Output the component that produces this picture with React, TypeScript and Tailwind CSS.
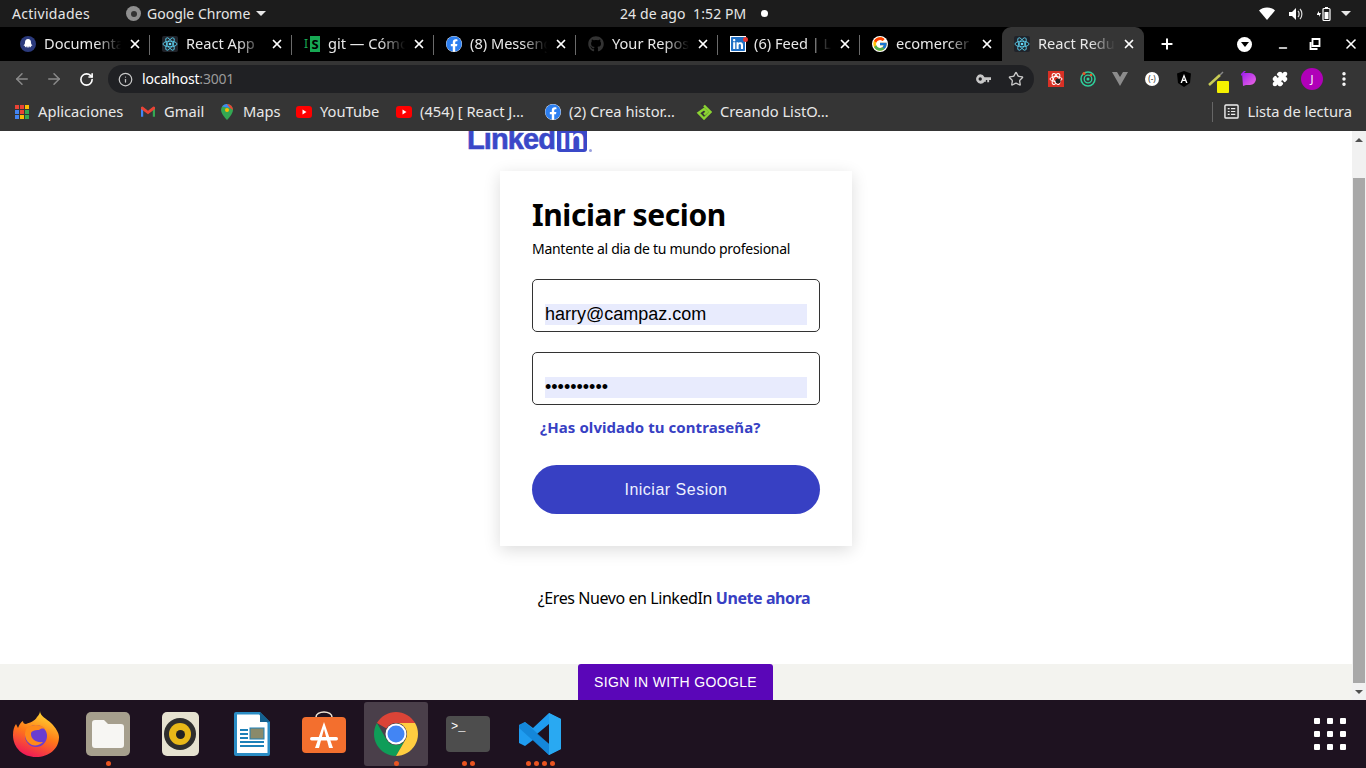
import { X, ArrowLeft, ArrowRight, RotateCw, Info, Star, Plus, Minus, Puzzle, MoreVertical } from "lucide-react"
import { FaFacebook, FaGithub, FaLinkedin } from "react-icons/fa"
import { FcGoogle } from "react-icons/fc"
import type { ReactNode } from "react"

function ReactIcon() {
  return (
    <svg viewBox="0 0 16 16" className="w-4 h-4 shrink-0">
      <rect width="16" height="16" rx="2" fill="#20232a" />
      <g fill="none" stroke="#61dafb" strokeWidth="0.8">
        <ellipse cx="8" cy="8" rx="7" ry="2.8" />
        <ellipse cx="8" cy="8" rx="7" ry="2.8" transform="rotate(60 8 8)" />
        <ellipse cx="8" cy="8" rx="7" ry="2.8" transform="rotate(120 8 8)" />
      </g>
      <circle cx="8" cy="8" r="1.3" fill="#61dafb" />
    </svg>
  )
}

function OctoIcon() {
  return (
    <svg viewBox="0 0 16 16" className="w-4 h-4 shrink-0">
      <circle cx="8" cy="8" r="8" fill="#2b3a7c" />
      <path d="M8 3c2 0 3 1.500 3 3.300 0 1.200.3 2.300 1.500 3.200l-1.200.3-.6 1.700-1-1.200-.8 1.700-.9-1.700-.9 1.700-.8-1.700-1 1.200-.6-1.700-1.200-.3C4.700 8.600 5 7.500 5 6.300 5 4.500 6 3 8 3z" fill="#fff" />
    </svg>
  )
}

function GitIcon() {
  return (
    <div className="w-4 h-4 shrink-0 flex items-center text-[13px] leading-4 font-bold">
      <span className="w-[6px] text-[#17a853] text-[12px] font-normal">I</span>
      <span className="w-[10px] h-4 bg-[#17a853] text-black text-center">S</span>
    </div>
  )
}

function YouTubeIcon() {
  return (
    <svg viewBox="0 0 16 12" className="w-4 h-3 shrink-0">
      <rect width="16" height="12" rx="3" fill="#f00" />
      <path d="M6.500 3.500v5l4-2.500z" fill="#fff" />
    </svg>
  )
}

function Tab({ icon, label, active, last, dot }: { icon: ReactNode; label: string; active?: boolean; last?: boolean; dot?: boolean }) {
  return (
    <div className={`relative w-[142px] h-[34px] flex items-center pl-3 pr-[8px] ${active ? "bg-[#353535] rounded-t-[9px]" : ""}`}>
      {icon}
      {dot && <div className="absolute left-[25px] top-[10px] w-[5px] h-[5px] rounded-full bg-[#e53935]" />}
      <span className="ml-2 flex-1 whitespace-nowrap text-[14.6px] text-[#e8e8e8] [mask-image:linear-gradient(to_right,black_62%,transparent_92%)]">
        {label}
      </span>
      <X className="w-[14px] h-[14px] text-white shrink-0" strokeWidth={3} />
      {!active && !last && <div className="absolute right-0 top-[8px] h-[20px] w-px bg-[#6a6a6a]" />}
    </div>
  )
}

function Bookmark({ icon, label, width }: { icon: ReactNode; label: string; width: number }) {
  return (
    <div className="flex items-center">
      <div className="w-4 flex justify-center shrink-0">{icon}</div>
      <span className="ml-2 pb-[2px] whitespace-nowrap text-[14.7px] text-[#e8e8e8]" style={{ width }}>
        {label}
      </span>
    </div>
  )
}

function ExtCell({ children }: { children: ReactNode }) {
  return <div className="relative w-8 h-8 flex items-center justify-center">{children}</div>
}

function DockCell({ children, dots = 0, active }: { children: ReactNode; dots?: number; active?: boolean }) {
  return (
    <div className="relative w-[72px] h-[68px] flex items-center justify-center">
      {active && <div className="absolute left-1 top-[2px] w-16 h-16 rounded-[3px] bg-[#4a3f4a]" />}
      <div className="relative">{children}</div>
      <div className="absolute bottom-[2px] left-0 right-0 flex justify-center gap-[3px]">
        {Array.from({ length: dots }).map((_, i) => (
          <div key={i} className="w-[5px] h-[5px] rounded-full bg-[#e95420]" />
        ))}
      </div>
    </div>
  )
}

export default function App() {
  return (
    <div className="w-[1366px] h-[768px] overflow-hidden flex flex-col font-['Noto_Sans',sans-serif] bg-white">
      {/* Ubuntu top bar */}
      <div className="h-[27px] bg-[#1c1c1c] flex items-center text-[14px] text-[#e6e6e6] shrink-0">
        <span className="ml-3 w-[114px] tracking-[0.3px]">Actividades</span>
        <div className="w-[15px] h-[15px] rounded-full bg-[#8f8f8f] flex items-center justify-center">
          <div className="w-[6px] h-[6px] rounded-full bg-[#333]" />
        </div>
        <span className="ml-[6px] w-[109px] whitespace-nowrap">Google Chrome</span>
        <div className="w-0 h-0 border-x-[5px] border-x-transparent border-t-[5px] border-t-[#e6e6e6]" />
        <span className="ml-[354px] w-[132px] whitespace-nowrap tracking-[0.1px]">24 de ago&nbsp; 1:52 PM</span>
        <div className="ml-[9px] w-[7px] h-[7px] rounded-full bg-white" />
        <svg viewBox="0 0 16 16" className="ml-[491px] w-4 h-4"><path d="M8 14L0 4.500C2 2.500 5 1.500 8 1.500s6 1 8 3z" fill="#fff" /></svg>
        <svg viewBox="0 0 16 16" className="ml-3 w-4 h-4"><path d="M2 6h3l4-4v12l-4-4H2z" fill="#fff" /><path d="M11 5c1.500 1.500 1.500 4.500 0 6M13 3c2.500 2.500 2.500 7.500 0 10" fill="none" stroke="#ddd" strokeWidth="1.200" /></svg>
        <svg viewBox="0 0 16 16" className="ml-[13px] w-4 h-4"><path d="M1 8l2-3v2h2L3 11V9H1z" fill="#fff" /><rect x="7" y="2.500" width="7" height="12" rx="1" fill="none" stroke="#fff" strokeWidth="1.200" /><rect x="8.500" y="6" width="4" height="7" fill="#fff" /><rect x="9" y="1" width="3" height="1.500" fill="#fff" /></svg>
        <div className="ml-[9px] w-0 h-0 border-x-[5px] border-x-transparent border-t-[5px] border-t-[#e6e6e6]" />
      </div>

      {/* Chrome tabs */}
      <div className="h-[34px] bg-black flex items-center pl-2 shrink-0">
        <Tab icon={<OctoIcon />} label="Documenta" />
        <Tab icon={<ReactIcon />} label="React App" />
        <Tab icon={<GitIcon />} label="git — Cómo" />
        <Tab icon={<FaFacebook className="w-4 h-4 shrink-0 text-[#2d7ff0] bg-white rounded-full" />} label="(8) Messeng" />
        <Tab icon={<FaGithub className="w-4 h-4 shrink-0 text-[#333]" />} label="Your Repos" />
        <Tab icon={<FaLinkedin className="w-4 h-4 shrink-0 text-[#1f6fc4] bg-white" />} label="(6) Feed | Li" dot />
        <Tab icon={<FcGoogle className="w-4 h-4 shrink-0 bg-white rounded-full" />} label="ecomercer -" last />
        <Tab icon={<ReactIcon />} label="React Redu" active />
        <Plus className="ml-[15px] w-4 h-4 text-white" strokeWidth={3} />
        <div className="ml-[62px] w-[15px] h-[15px] rounded-full bg-white flex items-center justify-center">
          <div className="w-0 h-0 border-x-[4px] border-x-transparent border-t-[5px] border-t-black" />
        </div>
        <Minus className="ml-[25px] mt-[8px] w-[12px] h-[12px] text-white" strokeWidth={3} />
        <svg viewBox="0 0 12 12" className="ml-[20px] w-[12px] h-[12px]"><path d="M3.500 1h7v7h-7z M1.500 4v7h7" fill="none" stroke="#fff" strokeWidth="1.800" /></svg>
        <X className="ml-[22px] w-[16px] h-[16px] text-white" strokeWidth={2.4} />
      </div>

      {/* Toolbar */}
      <div className="h-[36px] bg-[#353535] flex items-center pl-[6px] shrink-0">
        <div className="w-8 flex justify-center"><ArrowLeft className="w-[18px] h-[18px] text-[#8a8a8a]" /></div>
        <div className="w-8 flex justify-center"><ArrowRight className="w-[18px] h-[18px] text-[#8a8a8a]" /></div>
        <div className="w-8 flex justify-center"><RotateCw className="w-[15px] h-[15px] text-white" strokeWidth={2.6} /></div>
        <div className="ml-[6px] w-[926px] h-[28px] rounded-full bg-[#202124] flex items-center pl-[10px] pr-[10px]">
          <Info className="w-[15px] h-[15px] text-[#c8c8c8]" />
          <span className="ml-[9px] pb-[2px] text-[14px] tracking-[-0.2px] text-white">localhost<span className="text-[#9a9a9a]">:3001</span></span>
          <svg viewBox="0 0 16 10" className="ml-auto w-[15px] h-[10px]">
            <path d="M4.500 0a5 5 0 014.600 3H16v3h-2v2.500h-2V6h-1.500v2H9.100A5 5 0 114.500 0zm0 3.200a1.800 1.800 0 100 3.600 1.800 1.800 0 000-3.600z" fill="#c8c8c8" fillRule="evenodd" />
          </svg>
          <Star className="ml-[17px] w-4 h-4 text-[#c8c8c8]" />
        </div>
        <div className="ml-[6px] flex items-center">
          <ExtCell>
            <div className="w-4 h-4 bg-[#d93025] flex items-center justify-center">
              <svg viewBox="0 0 16 16" className="w-4 h-4"><g fill="none" stroke="#fff" strokeWidth="1"><ellipse cx="8" cy="8" rx="6" ry="2.500" /><ellipse cx="8" cy="8" rx="6" ry="2.500" transform="rotate(60 8 8)" /><ellipse cx="8" cy="8" rx="6" ry="2.500" transform="rotate(120 8 8)" /></g><circle cx="10" cy="10" r="2.500" fill="#222" /></svg>
            </div>
          </ExtCell>
          <ExtCell>
            <svg viewBox="0 0 16 16" className="w-4 h-4"><circle cx="8" cy="8" r="7" fill="none" stroke="#2fcf9b" strokeWidth="1.500" /><circle cx="8" cy="8" r="3.800" fill="none" stroke="#2fcf9b" strokeWidth="1.300" /><circle cx="8" cy="8" r="1.500" fill="#2fcf9b" /><circle cx="4" cy="2.500" r="1.500" fill="#e8562a" /><circle cx="11" cy="4" r="1.300" fill="#e8562a" /></svg>
          </ExtCell>
          <ExtCell>
            <svg viewBox="0 0 16 14" className="w-4 h-[14px]"><path d="M0 0h5l3 5 3-5h5L8 14z" fill="#8c8c8c" /></svg>
          </ExtCell>
          <ExtCell>
            <div className="w-[14px] h-[14px] rounded-full bg-white flex items-center justify-center text-[8px] leading-none text-[#333]">(-)</div>
          </ExtCell>
          <ExtCell>
            <svg viewBox="0 0 16 16" className="w-4 h-4"><path d="M8 0l7 2.500-1 9.500-6 4-6-4-1-9.500z" fill="#000" /><path d="M8 3L4.500 12h1.500l.7-2h2.600l.7 2h1.500zM7.200 8.700L8 6.300l.8 2.400z" fill="#fff" /></svg>
          </ExtCell>
          <ExtCell>
            <svg viewBox="0 0 16 16" className="w-4 h-4"><path d="M1 14L12 4" stroke="#c9cc55" strokeWidth="2.500" /><path d="M12 4l3-3" stroke="#888" strokeWidth="1.500" /></svg>
            <div className="absolute left-[17px] top-[18px] w-3 h-3 bg-[#f4f000] rounded-[1px]" />
          </ExtCell>
          <ExtCell>
            <svg viewBox="0 0 16 16" className="w-4 h-4"><defs><linearGradient id="pg" x1="0" y1="0" x2="1" y2="1"><stop offset="0" stopColor="#a020f0" /><stop offset="1" stopColor="#f06ae0" /></linearGradient></defs><path d="M2 2h8a6 6 0 010 12H6l-3 1z" fill="url(#pg)" /><path d="M1 3l3-3h2L1 5z" fill="#a020f0" /></svg>
          </ExtCell>
          <ExtCell><Puzzle className="w-4 h-4 text-white fill-white" /></ExtCell>
          <ExtCell>
            <div className="w-[22px] h-[22px] rounded-full bg-[#b000b8] flex items-center justify-center text-[11px] text-white">J</div>
          </ExtCell>
          <ExtCell><MoreVertical className="w-[18px] h-[18px] text-white" strokeWidth={2.6} /></ExtCell>
        </div>
      </div>

      {/* Bookmarks */}
      <div className="h-[34px] bg-[#353535] flex items-center gap-4 pl-[14px] pb-1 shrink-0">
        <Bookmark
          width={86}
          label="Aplicaciones"
          icon={
            <div className="grid grid-cols-3 gap-[1px] w-[14px]">
              {["#ea4335", "#ea4335", "#fbbc04", "#4285f4", "#ea4335", "#34a853", "#4285f4", "#fbbc04", "#34a853"].map((c, i) => (
                <div key={i} className="w-[4px] h-[4px]" style={{ background: c }} />
              ))}
            </div>
          }
        />
        <Bookmark
          width={39}
          label="Gmail"
          icon={
            <svg viewBox="0 0 16 12" className="w-[14px] h-[11px]"><path d="M0 12V1l2.500 1v10z" fill="#4285f4" /><path d="M16 12V1l-2.500 1v10z" fill="#34a853" /><path d="M0 1c1-1 2-1 3 0l5 4 5-4c1-1 2-1 3 0v2l-8 6-8-6z" fill="#ea4335" /></svg>
          }
        />
        <Bookmark
          width={37}
          label="Maps"
          icon={
            <svg viewBox="0 0 12 16" className="w-3 h-4"><path d="M6 0a6 6 0 00-6 6c0 4 6 10 6 10s6-6 6-10a6 6 0 00-6-6z" fill="#34a853" /><path d="M1 2.500A6 6 0 016 0l3 4z" fill="#4285f4" /><path d="M6 0a6 6 0 016 6L9 4z" fill="#ea4335" /><circle cx="6" cy="6" r="2" fill="#fbbc04" /></svg>
          }
        />
        <Bookmark width={60} label="YouTube" icon={<YouTubeIcon />} />
        <Bookmark width={109} label="(454) [ React J…" icon={<YouTubeIcon />} />
        <Bookmark width={111} label="(2) Crea histor…" icon={<FaFacebook className="w-4 h-4 text-[#2d7ff0] bg-white rounded-full" />} />
        <Bookmark
          width={112}
          label="Creando ListO…"
          icon={
            <svg viewBox="0 0 16 16" className="w-4 h-4"><path d="M8 1.500L14.500 8 8 14.500 2.500 9 8 5l3 3-3 2.500" fill="none" stroke="#8bd432" strokeWidth="2.400" /></svg>
          }
        />
        <div className="ml-auto h-[20px] w-px bg-[#666]" />
        <div className="-ml-[5px] mr-[14px] flex items-center">
          <svg viewBox="0 0 16 16" className="w-[15px] h-[15px]"><rect x="1" y="1" width="14" height="14" rx="1" fill="none" stroke="#eee" strokeWidth="1.500" /><path d="M4 5h2M7.500 5H12M4 8h2M7.500 8H12M4 11h2M7.500 11H12" stroke="#eee" strokeWidth="1.300" /></svg>
          <span className="ml-2 pb-[2px] text-[14.7px] text-[#e8e8e8] whitespace-nowrap">Lista de lectura</span>
        </div>
      </div>

      {/* Page */}
      <main className="flex-1 min-h-0 flex overflow-hidden">
        <div className="flex-1 flex flex-col items-center">
          <div className="w-[352px] h-[22px] pb-[1px] overflow-hidden flex items-end -translate-x-[33px]">
            <span className="font-['Liberation_Sans',sans-serif] font-bold text-[29px] leading-[26px] text-[#3a48c8] tracking-[-0.9px] [-webkit-text-stroke:0.6px_#3a48c8]">Linked</span>
            <span className="ml-[2px] w-[30px] h-[26px] bg-[#3a48c8] rounded-[3px] font-['Liberation_Sans',sans-serif] font-bold text-[29px] leading-[26px] text-white text-center shrink-0">in</span>
            <span className="w-[3px] h-[3px] ml-[2px] rounded-full bg-[#9aa0dd] shrink-0" />
          </div>

          <div className="mt-[18px] w-[352px] bg-white shadow-[0_4px_16px_rgba(0,0,0,0.14)] px-8 pt-6 pb-8">
            <h1 className="text-[30px] leading-[40px] tracking-[-0.4px] font-bold text-black">Iniciar secion</h1>
            <p className="mt-1 text-[14px] leading-5 tracking-[-0.28px] text-black">Mantente al dia de tu mundo profesional</p>

            <div className="mt-5 h-[53px] border border-[#333] rounded-[5px] px-3 pt-6">
              <input
                readOnly
                type="email"
                value="harry@campaz.com"
                className="block w-full h-[21px] bg-[#e8ebfd] text-[18px] font-['Liberation_Sans',sans-serif] text-black outline-none"
              />
            </div>
            <div className="mt-5 h-[53px] border border-[#333] rounded-[5px] px-3 pt-6">
              <input
                readOnly
                type="password"
                value="1234567890"
                className="block w-full h-[21px] bg-[#e8ebfd] text-[18px] font-['Liberation_Sans',sans-serif] text-black outline-none"
              />
            </div>

            <a className="block mt-3 pl-2 text-[15px] leading-5 tracking-[0.07px] font-bold text-[#3740c3]">¿Has olvidado tu contraseña?</a>

            <button className="mt-7 block w-full h-[49px] rounded-full bg-[#3740c3] text-[16px] tracking-[0.5px] font-['Liberation_Sans',sans-serif] text-[#eef0ff]">
              Iniciar Sesion
            </button>
          </div>

          <p className="mt-[40px] pr-1 text-[16px] leading-6 tracking-[-0.42px] text-black">
            ¿Eres Nuevo en LinkedIn <a className="font-bold text-[#3740c3]">Unete ahora</a>
          </p>

          <div className="mt-auto w-full h-9 bg-[#f3f3ef] flex justify-center">
            <button className="-ml-[1px] w-[195px] h-9 rounded-t-[3px] bg-[#5a06b8] text-white text-[14px] tracking-[0.35px] font-['Liberation_Sans',sans-serif]">
              SIGN IN WITH GOOGLE
            </button>
          </div>
        </div>

        {/* Scrollbar */}
        <div className="w-[14px] bg-[#f1f1f1] flex flex-col items-center">
          <div className="h-[17px] flex items-center justify-center">
            <div className="w-0 h-0 border-x-[4px] border-x-transparent border-b-[4px] border-b-[#505050]" />
          </div>
          <div className="mt-[30px] flex-1 w-3 bg-[#a8a8a8]" />
          <div className="h-[17px] flex items-center justify-center">
            <div className="w-0 h-0 border-x-[4px] border-x-transparent border-t-[4px] border-t-[#505050]" />
          </div>
        </div>
      </main>

      {/* Ubuntu dock */}
      <div className="h-[68px] bg-[#1e1220] flex items-center shrink-0">
        <DockCell>
          <svg viewBox="0 0 46 46" className="w-[46px] h-[46px]">
            <defs>
              <linearGradient id="ff" x1="0.7" y1="0" x2="0.3" y2="1"><stop offset="0" stopColor="#ffdd35" /><stop offset="0.5" stopColor="#ff7a18" /><stop offset="1" stopColor="#f0145a" /></linearGradient>
            </defs>
            <path d="M27 0c0 5 7 8 11 12 5 5 8 10 8 14 0 12-10 20-23 20C10 46 0 37 0 24c0-5 1-8 3-11l2 4c1-3 3-6 5-7 0 2 1 3 3 3 3-1 9-3 11-7 2-2 3-4 3-6z" fill="url(#ff)" />
            <circle cx="23" cy="25" r="11" fill="#6a3dd0" />
            <path d="M14 17c5-4 14-4 19 1-4-1-6 0-7 1-5 0-8 1-8 4 0 5 5 9 12 8-3 3-7 4-11 3-7-3-9-12-5-17z" fill="#ff8a1a" />
          </svg>
        </DockCell>
        <DockCell dots={1}>
          <div className="w-[44px] h-[44px] rounded-[5px] bg-[#a69f8d] flex items-center justify-center">
            <svg viewBox="0 0 32 28" className="w-[32px] h-[28px]"><path d="M0 3a3 3 0 013-3h9l4 4h13a3 3 0 013 3v18a3 3 0 01-3 3H3a3 3 0 01-3-3z" fill="#f7f6f3" /></svg>
          </div>
        </DockCell>
        <DockCell>
          <div className="w-[37px] h-[44px] rounded-[5px] bg-[#e6e2d0] flex items-center justify-center">
            <div className="w-[32px] h-[32px] rounded-full bg-[#2e2e2e] flex items-center justify-center">
              <div className="w-[22px] h-[22px] rounded-full bg-[#e8b818] flex items-center justify-center">
                <div className="w-[9px] h-[9px] rounded-full bg-[#222]" />
              </div>
            </div>
          </div>
        </DockCell>
        <DockCell>
          <svg viewBox="0 0 36 44" className="w-9 h-11">
            <path d="M2 0h24l10 10v32a2 2 0 01-2 2H2a2 2 0 01-2-2V2a2 2 0 012-2z" fill="#2a8cc4" />
            <path d="M3 2.500h22L33.500 11v30H3z" fill="#fff" />
            <path d="M26 0l10 10h-10z" fill="#14618f" />
            <path d="M6 18h8M6 22h8M6 26h8M6 30h24M6 34h24" stroke="#1c80b8" strokeWidth="1.800" />
            <rect x="16" y="16" width="14" height="11" fill="#8a8a6a" stroke="#1c80b8" />
          </svg>
        </DockCell>
        <DockCell>
          <svg viewBox="0 0 44 46" className="w-11 h-[46px]">
            <path d="M14 10V6a8 5 0 0116 0v4" fill="none" stroke="#f0e6d8" strokeWidth="1.500" />
            <rect y="6" width="44" height="36" rx="4" fill="#f36f2e" />
            <path d="M22 11l-9 26h4l5-19 5 19h4z" fill="#fff" />
            <rect x="8" y="26" width="28" height="3.500" rx="1.700" fill="#fff" />
          </svg>
        </DockCell>
        <DockCell dots={1} active>
          <svg viewBox="0 0 44 44" className="w-11 h-11">
            <path d="M2.950 11A22 22 0 0141.050 11H22A11 11 0 0012.470 16.500z" fill="#db4437" />
            <path d="M2.950 11A22 22 0 0022 44L31.530 27.500A11 11 0 0112.470 27.500z" fill="#0f9d58" />
            <path d="M41.050 11H22A11 11 0 0131.530 27.500L22 44A22 22 0 0041.050 11z" fill="#ffcd40" />
            <circle cx="22" cy="22" r="10.500" fill="#fff" />
            <circle cx="22" cy="22" r="8.500" fill="#4285f4" />
          </svg>
        </DockCell>
        <DockCell dots={2}>
          <div className="w-[44px] h-[36px] rounded-[4px] bg-[#4d4d4d] pl-[5px] pt-[3px] font-['Liberation_Mono',monospace] text-[12px] leading-4 text-white">&gt;_</div>
        </DockCell>
        <DockCell dots={4}>
          <svg viewBox="0 0 42 42" className="w-[42px] h-[42px]">
            <path d="M30 0l12 6v30l-12 6-16-15-8 6-6-3V12l6-3 8 6z" fill="#1f9cf0" />
            <path d="M30 11L18 21l12 10z" fill="#1e1220" />
            <path d="M0 12l6-3 24 22v11L0 15z" fill="#0f7fd0" opacity="0.7" />
            <path d="M30 0l12 6v30l-12 6z" fill="#29a9f2" />
          </svg>
        </DockCell>
        <div className="ml-auto mr-5 grid grid-cols-3 gap-[7px]">
          {Array.from({ length: 9 }).map((_, i) => (
            <div key={i} className="w-[6px] h-[6px] rounded-[1px] bg-white" />
          ))}
        </div>
      </div>
    </div>
  )
}
